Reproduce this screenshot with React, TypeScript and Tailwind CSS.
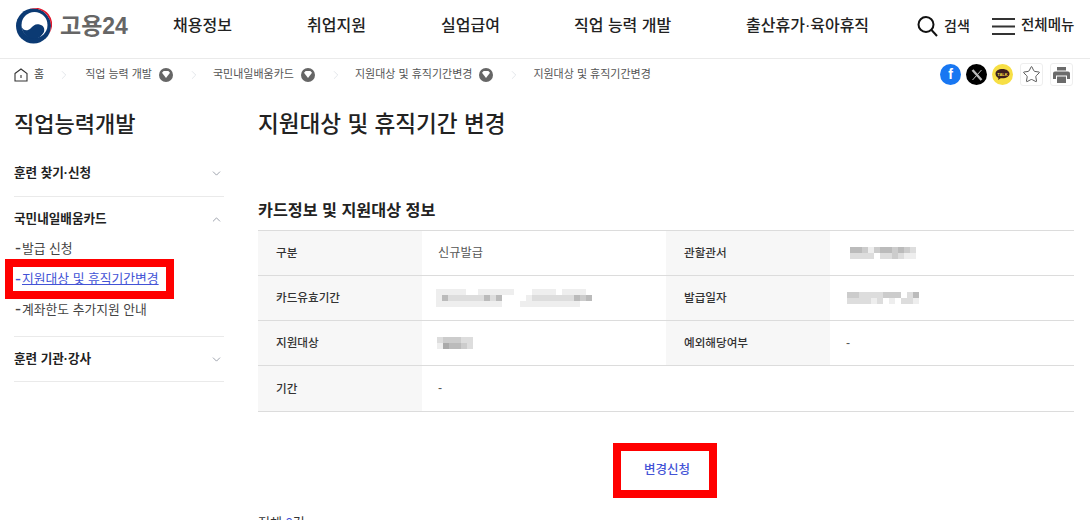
import type { ReactNode } from 'react';
import { ChevronDown, ChevronRight, ChevronUp, Star } from 'lucide-react';

const nav = [
  { label: '채용정보', width: 'w-[134px]' },
  { label: '취업지원', width: 'w-[134px]' },
  { label: '실업급여', width: 'w-[133px]' },
  { label: '직업 능력 개발', width: 'w-[172px]' },
  { label: '출산휴가·육아휴직', width: 'w-[171px]' },
];

const crumbs = ['직업 능력 개발', '국민내일배움카드', '지원대상 및 휴직기간변경'];

// pixelated (privacy blurred) values in the table, one hex digit per block = grey level
function Mosaic({ rows }: { rows: string[] }) {
  return (
    <div className="flex flex-col w-fit">
      {rows.map((row, r) => (
        <div key={r} className="flex">
          {row.split('').map((c, i) => (
            <div key={i} className="w-[6px] h-[6px]" style={{ background: `#${c}${c}${c}` }} />
          ))}
        </div>
      ))}
    </div>
  );
}

function Logo() {
  return (
    <svg width="37" height="36" viewBox="0 0 36 36">
      <circle cx="18" cy="18" r="17.500" fill="#0b3a73" />
      <path d="M14 1A17.500 17.500 0 0 1 33.500 26a16.500 16.500 0 0 0-19.500-25z" fill="#e0182d" />
      <circle cx="19" cy="17" r="13" fill="#fff" />
      <path d="M6 18.500c1 4 6 5 9 2 3-3 5-5 9-4 4 1 5.500 3.500 4.500 7.500-3 5-6.500 7-10.500 7-6 0-11-6-12-12.500z" fill="#0b3a73" />
    </svg>
  );
}

function Sep({ className }: { className?: string }) {
  return <ChevronRight size={14} strokeWidth={1} className={`text-gray-300 ${className ?? ''}`} />;
}

function Crumb({ label }: { label: string }) {
  return (
    <div className="flex items-center">
      <span>{label}</span>
      <span className="ml-[7px] mr-[14px] w-[14px] h-[14px] rounded-full bg-[#666] flex items-center justify-center">
        <svg width="8" height="7" viewBox="0 0 7 6">
          <path d="M0 1.500 1.500 0h4L7 1.500 3.500 6z" fill="#fff" />
        </svg>
      </span>
      <Sep className="mr-[12px]" />
    </div>
  );
}

function Section({ title, open }: { title: string; open?: boolean }) {
  const Icon = open ? ChevronUp : ChevronDown;
  return (
    <div className="flex items-center justify-between font-bold text-[12.600px] leading-[18px] pr-[1px]">
      <span>{title}</span>
      <Icon size={13} strokeWidth={1.200} className="text-gray-500" />
    </div>
  );
}

function Dash() {
  return <span className="w-[7px] text-[18px] leading-[16px]">-</span>;
}

function Th({ children }: { children: string }) {
  return <th className="bg-[#f7f7f7] text-left font-medium pl-[18px] text-[11.600px] text-[#333] w-[164px]">{children}</th>;
}

function Td({ children, colSpan }: { children: ReactNode; colSpan?: number }) {
  return (
    <td colSpan={colSpan} className="pl-[16px] text-[#555]">
      {children}
    </td>
  );
}

export default function App() {
  return (
    <div className="w-[1090px] h-[520px] overflow-hidden bg-white text-[#222] font-['Liberation_Sans','Noto_Sans_CJK_KR',sans-serif]">
      {/* header */}
      <header className="h-[59px] border-b border-[#eaeaea] flex items-center pl-[15px]">
        <div className="flex items-center w-[158px] pb-[6px]">
          <Logo />
          <span className="ml-[8px] text-[23px] font-semibold text-[#666]">고용24</span>
        </div>
        <nav className="flex text-[16px] font-medium pb-[6px]">
          {nav.map((n) => (
            <a key={n.label} className={n.width}>
              {n.label}
            </a>
          ))}
        </nav>
        <div className="flex items-center text-[14px] font-medium pb-[6px]">
          <svg width="21" height="22" viewBox="0 0 21 22" fill="none" stroke="#111" strokeWidth="2">
            <circle cx="9" cy="9.500" r="7.500" />
            <path d="M14.500 15l5.500 6" />
          </svg>
          <span className="ml-[6px] w-[48px]">검색</span>
          <svg width="23" height="17" viewBox="0 0 23 17" stroke="#333" strokeWidth="2">
            <path d="M0 1h23M0 8.500h23M0 16h23" />
          </svg>
          <span className="ml-[6px] text-[14.500px]">전체메뉴</span>
        </div>
      </header>

      {/* breadcrumb */}
      <div className="h-[31px] flex items-center justify-between pl-[14px] pr-[17px] text-[11px] text-[#555]">
        <div className="flex items-center">
          <svg width="14" height="14" viewBox="0 0 14 14" fill="none" stroke="#333" strokeWidth="1.100">
            <path d="M1 5.500 7 1l6 4.500V13H1z" />
            <path d="M7 7v3" />
          </svg>
          <span className="ml-[6px] mr-[13px] text-[#444]">홈</span>
          <Sep className="mr-[14px]" />
          {crumbs.map((c) => (
            <Crumb key={c} label={c} />
          ))}
          <span>{crumbs[2]}</span>
        </div>
        <div className="flex items-center">
          <span className="w-[21px] h-[21px] rounded-full bg-[#1877f2] text-white font-bold text-[14px] flex items-center justify-center">
            f
          </span>
          <span className="ml-[5px] w-[21px] h-[21px] rounded-full bg-black flex items-center justify-center">
            <svg width="12" height="12" viewBox="0 0 12 12" fill="none" stroke="#bbb">
              <path d="M1.500 1l9 10" strokeWidth="2.400" />
              <path d="M10.500 1l-9 10" strokeWidth="1" />
            </svg>
          </span>
          <span className="ml-[5px] w-[21px] h-[21px] rounded-full bg-[#f7df45] flex items-center justify-center">
            <svg width="15" height="13" viewBox="0 0 15 13">
              <path d="M7.500 1C3.500 1 .5 3 .5 5.800c0 1.800 1.200 3.300 3 4.100L3 12l2.700-1.800c.6.100 1.200.1 1.800.1 4 0 7-2 7-4.500S11.500 1 7.500 1z" fill="#3c1e1e" />
              <text x="7.500" y="7.500" fontSize="4" fontWeight="700" textAnchor="middle" fill="#f7df45">TALK</text>
            </svg>
          </span>
          <span className="ml-[7px] w-[23px] h-[23px] border border-[#eee] rounded-[3px] flex items-center justify-center">
            <Star size={19} strokeWidth={1.100} className="text-[#444]" />
          </span>
          <span className="ml-[7px] w-[23px] h-[23px] border border-[#eee] rounded-[3px] flex items-center justify-center">
            <svg width="17" height="16" viewBox="0 0 17 16">
              <path d="M4 0h9v3.500H4z" fill="#6b6b6b" />
              <path d="M2 4.500h13a2 2 0 0 1 2 2V12h-3V8.500H3V12H0V6.500a2 2 0 0 1 2-2z" fill="#6b6b6b" />
              <path d="M4 9.500h9V16H4z" fill="#6b6b6b" />
            </svg>
          </span>
        </div>
      </div>

      <div className="flex pl-[14px] pr-[16px]">
        {/* sidebar */}
        <aside className="w-[210px] mr-[34px] shrink-0">
          <h2 className="text-[22px] font-medium mt-[18px] leading-[34px]">직업능력개발</h2>
          <div className="pt-[22px] pb-[14px] border-b border-[#eaeaea]">
            <Section title="훈련 찾기·신청" />
          </div>
          <div className="pt-[13px] pb-[17px] border-b border-[#eaeaea]">
            <Section title="국민내일배움카드" open />
            <ul className="text-[12.800px] text-[#444] mt-[12px]">
              <li className="flex pl-[1px] leading-[18px]">
                <Dash />
                발급 신청
              </li>
              <li className="-ml-[9px] mt-[1px] w-[169px] h-[40px] border-8 border-[#ff0000] flex items-center pl-[2px] text-[#4353d6] leading-[18px]">
                <Dash />
                <span className="underline">지원대상 및 휴직기간변경</span>
              </li>
              <li className="flex pl-[1px] leading-[18px] mt-[2px]">
                <Dash />
                계좌한도 추가지원 안내
              </li>
            </ul>
          </div>
          <div className="pt-[13px] pb-[13px] border-b border-[#eaeaea]">
            <Section title="훈련 기관·강사" />
          </div>
        </aside>

        {/* content */}
        <main className="flex-1">
          <h1 className="text-[22.600px] font-medium mt-[18px] leading-[34px]">지원대상 및 휴직기간 변경</h1>
          <h3 className="text-[16.200px] font-bold mt-[57px] leading-[22px]">카드정보 및 지원대상 정보</h3>
          <table className="w-full mt-[9px] border-t border-[#dcdcdc] text-[12.200px] table-fixed">
            <tbody>
              <tr className="h-[45px] border-b border-[#dcdcdc]">
                <Th>구분</Th>
                <Td>신규발급</Td>
                <Th>관할관서</Th>
                <Td>
                  <div className="-ml-[2px]">
                    <Mosaic rows={['fbbcecbbcbcd', 'fddddfddcdee']} />
                  </div>
                </Td>
              </tr>
              <tr className="h-[45px] border-b border-[#dcdcdc]">
                <Th>카드유효기간</Th>
                <Td>
                  <div className="-ml-[2px]">
                    <Mosaic
                      rows={[
                        'eeeeeffeeeeeefffeeeefeeeef',
                        'ebddddddbdbffffedddddddbcb',
                        'eeeeeeeeeeefffeeeeeeeeeeff',
                      ]}
                    />
                  </div>
                </Td>
                <Th>발급일자</Th>
                <Td>
                  <div className="ml-[1px]">
                    <Mosaic rows={['ccddddcccfdb', 'ddddedfefdde']} />
                  </div>
                </Td>
              </tr>
              <tr className="h-[45px] border-b border-[#dcdcdc]">
                <Th>지원대상</Th>
                <Td>
                  <div className="-ml-[1px]">
                    <Mosaic rows={['dcccdd', 'eabbcd']} />
                  </div>
                </Td>
                <Th>예외해당여부</Th>
                <Td>-</Td>
              </tr>
              <tr className="h-[46px] border-b border-[#dcdcdc]">
                <Th>기간</Th>
                <Td colSpan={3}>-</Td>
              </tr>
            </tbody>
          </table>
          <div className="flex justify-center mt-[31px] pr-[2px]">
            <button className="w-[104px] h-[55px] border-8 border-[#ff0000] pl-[4px] text-[12.500px] font-medium text-[#4353d6]">
              변경신청
            </button>
          </div>
          <p className="text-[13px] text-[#333] mt-[15px]">
            전체 <span className="text-[#4353d6]">0</span>건
          </p>
        </main>
      </div>
    </div>
  );
}
